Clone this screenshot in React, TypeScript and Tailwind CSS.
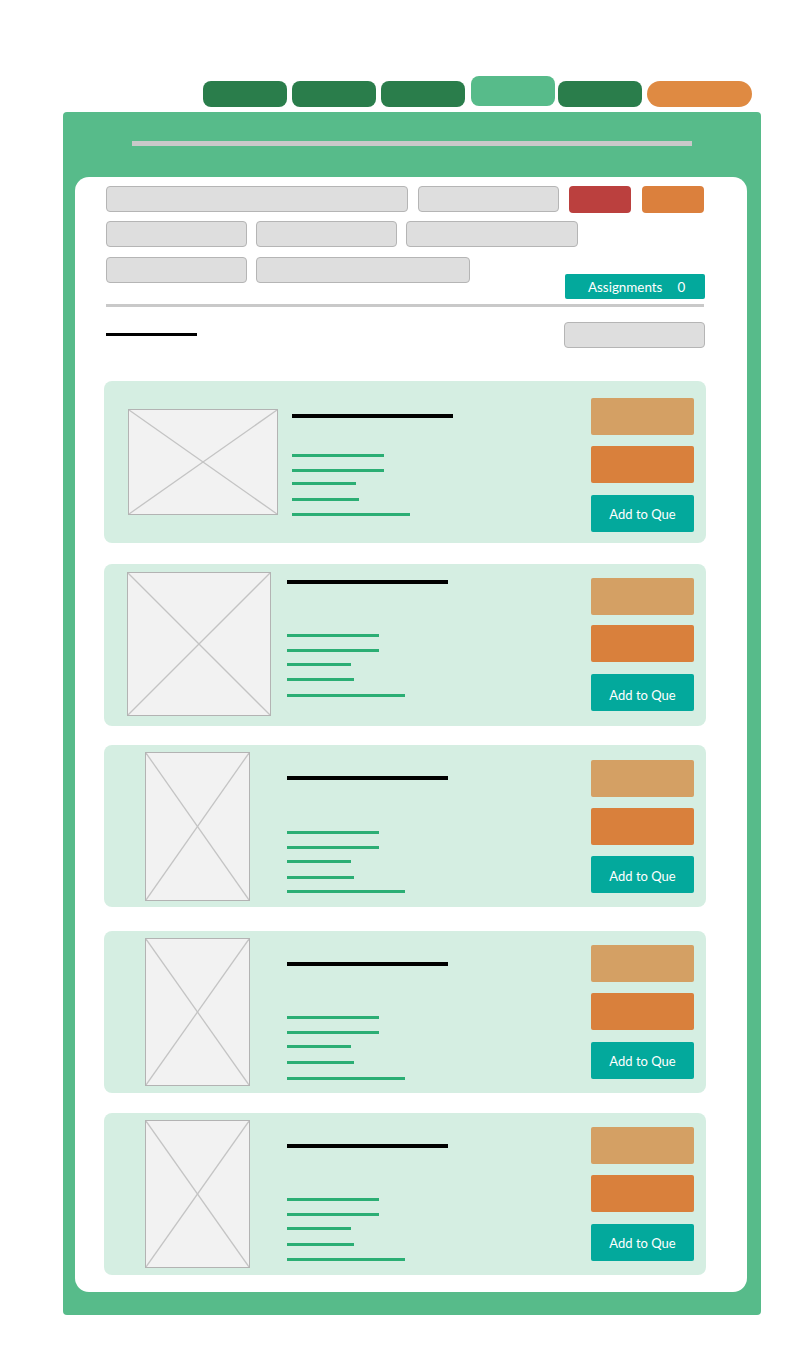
import React from 'react'

type Listing = {
  cardClass: string
  imgClass: string
  textClass: string
  lineGaps: string[]
  btnClass: string
  midBtnClass: string
  lastBtnClass: string
}

const lineWidths = ['w-[92px]', 'w-[92px]', 'w-[64px]', 'w-[67px]', 'w-[118px]']

const listings: Listing[] = [
  {
    cardClass: 'mt-[33px]',
    imgClass: 'ml-[24px] mt-[28px] w-[150px] h-[106px]',
    textClass: 'ml-[14px] pt-[33px]',
    lineGaps: ['mt-[36px]', 'mt-[12px]', 'mt-[10px]', 'mt-[13px]', 'mt-[12px]'],
    btnClass: 'pt-[17px]',
    midBtnClass: 'mt-[11px]',
    lastBtnClass: 'mt-[12px] pt-[2px]',
  },
  {
    cardClass: 'mt-[21px]',
    imgClass: 'ml-[23px] mt-[8px] w-[144px] h-[144px]',
    textClass: 'ml-[16px] pt-[16px]',
    lineGaps: ['mt-[50px]', 'mt-[12px]', 'mt-[11px]', 'mt-[12px]', 'mt-[13px]'],
    btnClass: 'pt-[14px]',
    midBtnClass: 'mt-[10px]',
    lastBtnClass: 'mt-[12px] pt-[6px]',
  },
  {
    cardClass: 'mt-[19px]',
    imgClass: 'ml-[41px] mt-[7px] w-[105px] h-[149px]',
    textClass: 'ml-[37px] pt-[31px]',
    lineGaps: ['mt-[51px]', 'mt-[12px]', 'mt-[11px]', 'mt-[13px]', 'mt-[11px]'],
    btnClass: 'pt-[15px]',
    midBtnClass: 'mt-[11px]',
    lastBtnClass: 'mt-[11px] pt-[4px]',
  },
  {
    cardClass: 'mt-[24px]',
    imgClass: 'ml-[41px] mt-[7px] w-[105px] h-[148px]',
    textClass: 'ml-[37px] pt-[31px]',
    lineGaps: ['mt-[50px]', 'mt-[12px]', 'mt-[11px]', 'mt-[13px]', 'mt-[13px]'],
    btnClass: 'pt-[14px]',
    midBtnClass: 'mt-[11px]',
    lastBtnClass: 'mt-[12px] pt-[2px]',
  },
  {
    cardClass: 'mt-[20px]',
    imgClass: 'ml-[41px] mt-[7px] w-[105px] h-[148px]',
    textClass: 'ml-[37px] pt-[31px]',
    lineGaps: ['mt-[50px]', 'mt-[12px]', 'mt-[11px]', 'mt-[13px]', 'mt-[12px]'],
    btnClass: 'pt-[14px]',
    midBtnClass: 'mt-[11px]',
    lastBtnClass: 'mt-[12px] pt-[2px]',
  },
]

const Field = ({ className }: { className: string }) => (
  <div className={`h-[26px] shrink-0 rounded-[4px] border border-[#b5b5b5] bg-[#dedede] ${className}`} />
)

const Tab = ({ className = 'bg-[#2a7d4b]' }: { className?: string }) => (
  <div className={`mt-[5px] h-[26px] w-[84px] rounded-[8px] ${className}`} />
)

const Placeholder = ({ className }: { className: string }) => (
  <div className={`shrink-0 border border-[#b3b3b3] bg-[#f2f2f2] ${className}`}>
    <svg className="block h-full w-full" viewBox="0 0 100 100" preserveAspectRatio="none">
      <line x1="0" y1="0" x2="100" y2="100" stroke="#c4c4c4" strokeWidth="1.3" vectorEffect="non-scaling-stroke" />
      <line x1="100" y1="0" x2="0" y2="100" stroke="#c4c4c4" strokeWidth="1.3" vectorEffect="non-scaling-stroke" />
    </svg>
  </div>
)

const ListingCard = ({ item }: { item: Listing }) => (
  <div className={`flex h-[162px] w-[602px] -ml-[2px] rounded-[8px] bg-[#d5eee2] ${item.cardClass}`}>
    <Placeholder className={item.imgClass} />
    <div className={item.textClass}>
      <div className="h-[4px] w-[161px] bg-black" />
      {lineWidths.map((w, i) => (
        <div key={i} className={`h-[3px] bg-[#2bae74] ${w} ${item.lineGaps[i]}`} />
      ))}
    </div>
    <div className={`ml-auto mr-[12px] w-[103px] ${item.btnClass}`}>
      <div className="h-[37px] rounded-[2px] bg-[#d4a064]" />
      <div className={`h-[37px] rounded-[2px] bg-[#d9803c] ${item.midBtnClass}`} />
      <div className={`flex h-[37px] items-center justify-center rounded-[2px] bg-[#03a99c] text-[13px] text-white ${item.lastBtnClass}`}>
        Add to Que
      </div>
    </div>
  </div>
)

export default function App() {
  return (
    <div className="min-h-[1367px] bg-white pt-[76px] pb-[52px] font-['Lato',sans-serif]">
      {/* Tabs */}
      <div className="ml-[203px] flex items-start">
        <Tab />
        <Tab className="ml-[5px] bg-[#2a7d4b]" />
        <Tab className="ml-[5px] bg-[#2a7d4b]" />
        <div className="ml-[6px] h-[30px] w-[84px] rounded-[8px] bg-[#57bb8a]" />
        <Tab className="ml-[3px] bg-[#2a7d4b]" />
        <div className="ml-[5px] mt-[5px] h-[26px] w-[105px] rounded-full bg-[#df8a42]" />
      </div>

      {/* Panel */}
      <div className="ml-[63px] mt-[5px] w-[698px] rounded-[4px] bg-[#57bb8a] pb-[23px] pt-[29px]">
        <div className="ml-[69px] h-[5px] w-[560px] bg-[#c9c9c9]" />
        <div className="ml-[12px] mt-[31px] w-[672px] rounded-[14px] bg-white pb-[17px] pl-[31px] pt-[9px]">
          <div className="w-[599px]">
            <div className="flex items-start">
              <Field className="w-[302px]" />
              <Field className="ml-[10px] w-[141px]" />
              <div className="ml-[10px] h-[27px] w-[62px] rounded-[4px] bg-[#bb403e]" />
              <div className="ml-[11px] h-[27px] w-[62px] rounded-[4px] bg-[#db803d]" />
            </div>
            <div className="mt-[8px] flex items-start">
              <Field className="w-[141px]" />
              <Field className="ml-[9px] w-[141px]" />
              <Field className="ml-[9px] w-[172px]" />
            </div>
            <div className="mt-[10px] flex items-start">
              <Field className="w-[141px]" />
              <Field className="ml-[9px] w-[214px]" />
              <div className="ml-auto mt-[17px] flex h-[25px] w-[140px] items-center rounded-[2px] bg-[#03a99c] pl-[23px] pt-[2px] text-[13.4px] text-white">
                <span>Assignments</span>
                <span className="ml-[15px]">0</span>
              </div>
            </div>
            <div className="mt-[5px] h-[3px] w-[598px] bg-[#c9c9c9]" />
            <div className="mt-[15px] flex items-start justify-between">
              <div className="mt-[11px] h-[3px] w-[91px] bg-black" />
              <Field className="w-[141px]" />
            </div>
          </div>

          {listings.map((item, i) => (
            <ListingCard key={i} item={item} />
          ))}
        </div>
      </div>
    </div>
  )
}
